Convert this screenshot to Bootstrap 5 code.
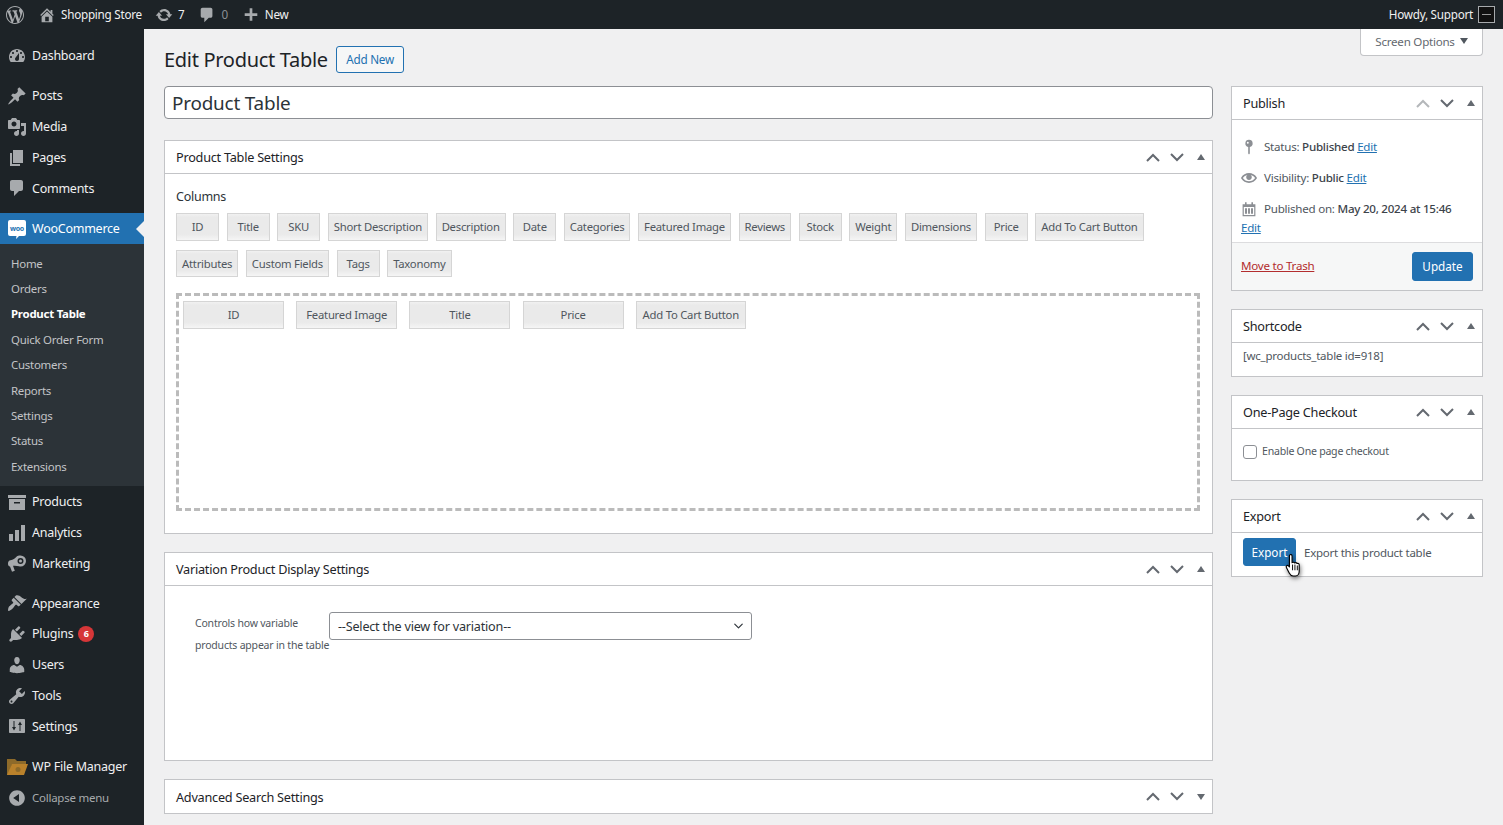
<!DOCTYPE html>
<html lang="en">
<head>
<meta charset="UTF-8">
<meta name="viewport" content="width=device-width, initial-scale=1.0">
<title>Edit Product Table</title>
<link href="https://cdn.jsdelivr.net/npm/bootstrap@5.3.0/dist/css/bootstrap.min.css" rel="stylesheet">
<style>
html, body { height: 825px; overflow: hidden; }
body { background: #f0f0f1; color: #3c434a; font: 12.5px/1.4 "Noto Sans", "Open Sans", sans-serif; letter-spacing: -.25px; }
a { color: #2271b1; }
.ico { width: 20px; height: 20px; fill: currentColor; flex: none; }

/* top bar */
.wp-bar { height: 29px; padding: 0; background: #1d2327; color: #f0f0f1; flex-wrap: nowrap; }
.bar-item { display: flex; align-items: center; height: 29px; color: #f0f0f1; font-size: 11.7px; }
.bar-item .ico { color: #a7aaad; width: 18px; height: 18px; }
.bar-logo { margin-left: 6px; margin-right: 14px; }
.bar-home { margin-right: 13px; gap: 5px; }
.bar-upd { margin-right: 14px; gap: 5px; }
.bar-com { margin-right: 14px; gap: 5px; }
.bar-new { gap: 5px; }
.bar-dim { color: #8c8f94; }
.bar-ava { width: 17px; height: 17px; border: 1px solid #a7aaad; background: #111; position: relative; margin-left: 5px; }
.bar-ava::after { content: ""; position: absolute; left: 3px; right: 3px; top: 7px; height: 1px; background: #999; }

/* side menu */
.wp-shell { height: 796px; }
.side-menu { width: 144px; flex: none; background: #1d2327; padding-top: 11.6px; }
.menu-row { display: flex; align-items: center; height: 30.75px; padding-left: 7px; color: #f0f0f1; font-size: 12.5px; text-decoration: none; }
.menu-row .ico { color: #a7aaad; margin-right: 5px; width: 20px; height: 20px; }
.menu-gap { height: 9.4px; }
.menu-on { background: #2271b1; color: #fff; position: relative; }
.menu-on::after { content: ""; position: absolute; right: 0; top: 8px; border: 8px solid transparent; border-left-width: 0; border-right-color: #f0f0f1; }
.woo-ico { width: 20px; height: 20px; margin-right: 5px; flex: none; }
.fm-ico { width: 22px; height: 18px; margin-left: -1px; margin-right: 4px; flex: none; }
.sub-menu { background: #2c3338; padding: 7px 0 7px; }
.sub-row { display: flex; align-items: center; height: 25.4px; padding-left: 11px; color: #c3c4c7; font-size: 11.45px; text-decoration: none; }
.sub-on { color: #fff; font-weight: 700; }
.menu-count { width: 16px; height: 16px; border-radius: 50%; background: #d63638; color: #fff; font-size: 9px; line-height: 16px; text-align: center; padding: 0; margin-left: 5px; letter-spacing: 0; }
.menu-fold { color: #a7aaad; font-size: 11.5px; margin-top: .7px; }

/* main */
.main-wrap { flex: 1; min-width: 0; padding: 0 20px; }
.head-row { height: 57px; }
.page-title { font-size: 20px; font-weight: 400; color: #1d2327; margin: 17px 8px 0 0; line-height: 27px; letter-spacing: -.3px; }
.add-new { margin-top: 17px; height: 27px; padding: 0 9.5px; font-size: 11.7px; line-height: 25px; border: 1px solid #2271b1; color: #2271b1; background: #f6f7f7; border-radius: 3px; }
.scr-tab { width: 123px; height: 27px; background: #fff; border: 1px solid #c3c4c7; border-top: 0; border-radius: 0 0 4px 4px; color: #646970; font-size: 11.6px; line-height: 25px; text-align: center; }
.scr-tab i { display: inline-block; border: 4.5px solid transparent; border-top: 6px solid #50575e; border-bottom: 0; margin-left: 5px; vertical-align: 2px; }
.col-main { width: 1049px; flex: none; }
.col-side { width: 252px; flex: none; }
.title-box { height: 33px; border: 1px solid #8c8f94; border-radius: 4px; background: #fff; padding: 0 7px; font-size: 18.9px; line-height: 33px; color: #2c3338; margin-bottom: 21px; letter-spacing: -.2px; }

/* meta boxes */
.mbox { border: 1px solid #c3c4c7; border-radius: 0; background: #fff; margin-bottom: 18px; color: #3c434a; --bs-card-bg: #fff; }
.mbox-head { height: 33px; padding: 0 11px; background: #fff; border-bottom: 1px solid #c3c4c7; border-radius: 0 !important; font-size: 12.7px; color: #1d2327; }
.mbox-head > span:first-child { padding-top: 2px; }
.mbox-arrows { display: flex; align-items: center; gap: 10px; margin-right: -4px; color: #646970; }
.mbox-arrows svg { display: block; }
.arw { width: 14px; height: 9px; fill: none; stroke: currentColor; stroke-width: 2; }
.arw-off { color: #b4b7ba; }
.tri { width: 8px; height: 6px; fill: currentColor; margin-left: 3px; }

.settings-body { padding: 0 12px 22px 11px; }
.cols-label { font-size: 12.5px; color: #2c3338; margin: 13px 0 6px; line-height: 20px; }
.chip-row { display: flex; gap: 7.6px; margin-bottom: 9px; }
.col-chip { min-width: 43px; height: 27.5px; padding: 0 5px; border: 1px solid #d5d5d5; background: linear-gradient(#f1f1f1, #eaeaea 12%, #eaeaea 78%, #f5f5f5); color: #50575e; font-size: 11.3px; line-height: 25.5px; text-align: center; white-space: nowrap; }
.drop-zone { height: 218px; margin-top: 16px; border: 3px dashed #bbb; padding: 5px 4px; gap: 12.2px; display: flex; align-items: flex-start; }
.drop-zone .col-chip { min-width: 101px; }
.drop-zone .col-chip:last-child { min-width: 110px; }
.var-body { height: 174px; padding-top: 26px !important; }
.var-label { width: 134px; font-size: 10.5px; line-height: 22px; color: #50575e; white-space: nowrap; margin-left: 30px; letter-spacing: -.2px; }
.var-select { width: 423px; height: 28px; min-height: 28px; padding: 1px 24px 0 8px; font-size: 12.6px; line-height: 26px; color: #2c3338; border: 1px solid #8c8f94; border-radius: 3px; background-position: right 6px center; background-size: 13px 10px; letter-spacing: -.2px; }
.pub-body { padding-top: 17px; height: 122px; }
.pub-line { display: flex; align-items: center; height: 20px; font-size: 11.6px; color: #50575e; margin-bottom: 11px; }
.pub-line b { font-weight: 500; color: #3c434a; }
.pub-line .ico { width: 16px; height: 16px; color: #8c8f94; margin-right: 7px; margin-left: 9px; }
.pub-line.pub-date { margin-bottom: 0; }
.pub-edit { height: 18px; font-size: 11.6px; padding-left: 9px; line-height: 18px; }
.pub-foot { height: 48px; background: #f6f7f7; border-top: 1px solid #dcdcde; padding: 0 9px; }
.trash { color: #b32d2e; font-size: 11.6px; }
.wp-btn { height: 29px; min-width: 61px; padding: 0 8px; border-radius: 3px; background: #2271b1; border: 1px solid #2271b1; color: #fff; font-size: 11.7px; line-height: 27px; }
.short-text { padding: 5px 11px 0; height: 33px; font-size: 11.5px; color: #50575e; }
.check-row { height: 51px; padding: 0 11px 6px; font-size: 10.6px; color: #50575e; }
.check-row .form-check-input { width: 14px; height: 14px; margin: 0 5px 0 0; border: 1px solid #8c8f94; border-radius: 3px; }
.export-body { height: 43px; padding: 5px 11px 0; font-size: 11.5px; color: #50575e; position: relative; }
.export-btn { min-width: 53px; height: 28px; line-height: 26px; padding: 0 6px 2px; }
.export-txt { margin: 7px 0 0 8px; }
.hand { position: absolute; left: 52px; top: 20px; width: 19px; height: 25px; filter: drop-shadow(1px 2px 2px rgba(0,0,0,.5)); }
</style>
</head>
<body>
<svg width="0" height="0" class="position-absolute">
  <symbol id="i-wp" viewBox="0 0 20 20"><path d="M20 10c0-5.51-4.49-10-10-10C4.48 0 0 4.49 0 10c0 5.52 4.48 10 10 10 5.51 0 10-4.48 10-10zM7.78 15.37L4.37 6.22c.55-.02 1.17-.08 1.17-.08.5-.06.44-1.13-.06-1.11 0 0-1.45.11-2.37.11-.18 0-.37 0-.58-.01C4.12 2.69 6.87 1.11 10 1.11c2.33 0 4.45.87 6.05 2.34-.68-.11-1.65.39-1.65 1.58 0 .74.45 1.36.9 2.1.35.61.55 1.36.55 2.46 0 1.49-1.4 5-1.4 5l-3.03-8.37c.54-.02.82-.17.82-.17.5-.05.44-1.25-.06-1.22 0 0-1.44.12-2.38.12-.87 0-2.33-.12-2.33-.12-.5-.03-.56 1.2-.06 1.22l.92.08 1.26 3.41zM17.41 10c.24-.64.74-1.87.43-4.25.7 1.29 1.05 2.71 1.05 4.25 0 3.29-1.73 6.24-4.4 7.78.97-2.59 1.94-5.2 2.92-7.78zM6.1 18.09C3.12 16.65 1.11 13.53 1.11 10c0-1.3.23-2.48.72-3.59C3.25 10.3 4.67 14.2 6.1 18.09zm4.03-6.63l2.58 6.98c-.86.29-1.76.45-2.71.45-.79 0-1.57-.11-2.29-.33.81-2.38 1.62-4.74 2.42-7.1z"/></symbol>
  <symbol id="i-home" viewBox="0 0 20 20"><path d="M16 8.5l1.53 1.53-1.06 1.06L10 4.62l-6.47 6.47-1.06-1.06L10 2.5l4 4v-2h2v4zm-6-2.46l6 5.99V18H4v-5.97zM12 17v-5H8v5h4z"/></symbol>
  <symbol id="i-update" viewBox="0 0 20 20"><path d="M10.2 3.28c3.53 0 6.43 2.61 6.92 6h2.08l-3.5 4-3.5-4h2.32c-.45-1.97-2.21-3.45-4.32-3.45-1.45 0-2.73.71-3.54 1.78L4.95 5.66C6.23 4.2 8.11 3.28 10.2 3.28zm-.4 13.44c-3.52 0-6.43-2.61-6.92-6H.8l3.5-4c1.17 1.33 2.33 2.67 3.5 4H5.48c.45 1.97 2.21 3.45 4.32 3.45 1.45 0 2.73-.71 3.54-1.78l1.71 1.95c-1.28 1.46-3.15 2.38-5.25 2.38z"/></symbol>
  <symbol id="i-comment" viewBox="0 0 20 20"><path d="M5 2h9c1.1 0 2 .9 2 2v7c0 1.1-.9 2-2 2h-2l-5 5v-5H5c-1.1 0-2-.9-2-2V4c0-1.1.9-2 2-2z"/></symbol>
  <symbol id="i-plus" viewBox="0 0 20 20"><path d="M17 8v3h-5.5v5.5h-3V11H3V8h5.5V2.5h3V8z"/></symbol>
  <symbol id="i-dash" viewBox="0 0 20 20"><path d="M3.76 16h12.48c1.1-1.37 1.76-3.1 1.76-5 0-4.42-3.58-8-8-8s-8 3.58-8 8c0 1.9.66 3.63 1.76 5zM10 4c.55 0 1 .45 1 1s-.45 1-1 1-1-.45-1-1 .45-1 1-1zM6 6c.55 0 1 .45 1 1s-.45 1-1 1-1-.45-1-1 .45-1 1-1zm8 0c.55 0 1 .45 1 1s-.45 1-1 1-1-.45-1-1 .45-1 1-1zm-5.37 5.55L12 7v6c0 1.1-.9 2-2 2s-2-.9-2-2c0-.57.24-1.08.63-1.45zM4 10c.55 0 1 .45 1 1s-.45 1-1 1-1-.45-1-1 .45-1 1-1zm12 0c.55 0 1 .45 1 1s-.45 1-1 1-1-.45-1-1 .45-1 1-1z"/></symbol>
  <symbol id="i-pin" viewBox="0 0 20 20"><path d="M10.44 3.02l1.82-1.82 6.36 6.35-1.83 1.82c-1.05-.68-2.48-.57-3.41.36l-.75.75c-.92.93-1.04 2.35-.35 3.41l-1.83 1.82-2.41-2.41-2.8 2.79c-.42.42-3.38 2.71-3.8 2.29s1.86-3.39 2.28-3.81l2.79-2.79L4.1 9.36l1.83-1.82c1.05.69 2.48.57 3.4-.36l.75-.75c.93-.92 1.05-2.35.36-3.41z"/></symbol>
  <symbol id="i-media" viewBox="0 0 20 20"><path d="M13 11V4c0-.55-.45-1-1-1h-1.67L9 1H5L3.67 3H2c-.55 0-1 .45-1 1v7c0 .55.45 1 1 1h10c.55 0 1-.45 1-1zM7 4.5c1.38 0 2.5 1.12 2.5 2.5S8.38 9.5 7 9.5 4.5 8.38 4.5 7 5.62 4.5 7 4.5zM14 6h5v10.5c0 1.38-1.12 2.5-2.5 2.5S14 17.88 14 16.5s1.12-2.5 2.5-2.5c.17 0 .34.02.5.05V9h-3V6zm-4 8.05V13h2v3.5c0 1.38-1.12 2.5-2.5 2.5S7 17.88 7 16.5 8.12 14 9.5 14c.17 0 .34.02.5.05z"/></symbol>
  <symbol id="i-pages" viewBox="0 0 20 20"><path d="M6 15V2h10v13H6zm-1 1h8v2H3V5h2v11z"/></symbol>
  <symbol id="i-box" viewBox="0 0 20 20"><path d="M1 3h18v3H1V3zm1 4h16v11H2V7zm5 3v1.5h6V10H7z" fill-rule="evenodd"/></symbol>
  <symbol id="i-bars" viewBox="0 0 20 20"><path d="M2 11h4v7H2zM8 7h4v11H8zM14 2h4v16h-4z"/></symbol>
  <symbol id="i-mega" viewBox="0 0 20 20"><path fill-rule="evenodd" d="M13.5 2.5a5.500 5.500 0 1 1 0 11c-.5 0-1-.1-1.500-.2-2-.6-4-.8-6-.5l1.800 5-2.800 1-2-5.300c-1.500-.3-2-1.300-2-3 0-2 1-3 2.500-3.300 2.500-.5 4.500-1.800 6.500-4 .6-.5 1.500-.7 3.500-.7zm0 2.500a3 3 0 1 0 0 6 3 3 0 0 0 0-6zm0 1.500a1.500 1.500 0 1 1 0 3 1.500 1.500 0 0 1 0-3z"/></symbol>
  <symbol id="i-brush" viewBox="0 0 20 20"><path d="M14.48 11.06L7.41 3.99l1.5-1.5c.5-.56 2.3-.47 3.51.32 1.21.8 1.43 1.28 2.91 2.1 1.18.64 2.45 1.26 4.45.85zm-.71.71L6.7 4.7 4.93 6.47c-.39.39-.39 1.02 0 1.41l1.06 1.06c.39.39.39 1.03 0 1.42-.6.6-1.43 1.11-2.21 1.69-.35.26-.7.53-1.01.84C1.43 13.23.78 17.24 1.2 17.8c.68.68 3.33-1.29 4.69-2.65.31-.31.58-.66.84-1.01.58-.78 1.09-1.61 1.69-2.21.39-.39 1.03-.39 1.42 0l1.06 1.06c.39.39 1.02.39 1.41 0z"/></symbol>
  <symbol id="i-plug" viewBox="0 0 20 20"><path d="M13.11 4.36L9.87 7.6 8 5.73l3.24-3.24c.35-.34 1.05-.2 1.56.32.52.51.66 1.21.31 1.55zm-8 1.77l.91-1.12 9.01 9.01-1.19.84c-.71.71-2.63 1.16-3.82 1.16H6.14L4.9 17.26c-.59.59-1.54.59-2.12 0-.59-.58-.59-1.53 0-2.12l1.24-1.24v-3.88c0-1.13.4-3.19 1.09-3.89zm7.26 3.97l3.24-3.24c.34-.35 1.04-.21 1.55.31.52.51.66 1.21.31 1.55l-3.24 3.25z"/></symbol>
  <symbol id="i-user" viewBox="0 0 20 20"><path d="M10 9.25c-2.27 0-2.73-3.44-2.73-3.44C7 4.02 7.82 2 9.97 2c2.16 0 2.98 2.02 2.71 3.81 0 0-.41 3.44-2.68 3.44zm0 2.57L12.72 10c2.39 0 4.52 2.33 4.52 4.53v2.49s-3.65 1.13-7.24 1.13c-3.65 0-7.24-1.13-7.24-1.13v-2.49c0-2.25 1.94-4.48 4.47-4.48z"/></symbol>
  <symbol id="i-tool" viewBox="0 0 20 20"><path d="M16.68 9.77c-1.34 1.34-3.3 1.67-4.95.99l-5.41 6.52c-.99.99-2.59.99-3.58 0s-.99-2.59 0-3.57l6.52-5.42c-.68-1.65-.35-3.61.99-4.95 1.28-1.28 3.12-1.62 4.72-1.06l-2.89 2.89 2.82 2.82 2.86-2.87c.53 1.58.18 3.39-1.08 4.65zM3.81 16.21c.4.39 1.04.39 1.43 0 .4-.4.4-1.04 0-1.43-.39-.4-1.03-.4-1.43 0-.39.39-.39 1.03 0 1.43z"/></symbol>
  <symbol id="i-sett" viewBox="0 0 20 20"><path fill-rule="evenodd" d="M3 3h14c.55 0 1 .45 1 1v12c0 .55-.45 1-1 1H3c-.55 0-1-.45-1-1V4c0-.55.45-1 1-1zm3.5 2v6H5l2 3.5L9 11H7.5V5h-1zm6 10V9H11l2-3.5L15 9h-1.5v6h-1z"/></symbol>
  <symbol id="i-fold" viewBox="0 0 20 20"><path d="M10 2.16c4.33 0 7.84 3.51 7.84 7.84s-3.51 7.84-7.84 7.84S2.16 14.33 2.16 10 5.71 2.16 10 2.16zm2 11.72V6.12L6.18 9.97z"/></symbol>
  <symbol id="i-key" viewBox="0 0 20 20"><path d="M10 1a4.500 4.500 0 0 1 1 8.900V18l-1 1.500L9 18V9.900A4.500 4.500 0 0 1 10 1zM8.500 3.500a1.200 1.200 0 1 0 0 2.400 1.200 1.200 0 0 0 0-2.400z" fill-rule="evenodd"/></symbol>
  <symbol id="i-eye" viewBox="0 0 20 20"><path d="M19.7 9.4C17.7 6 14 3.9 10 3.9S2.3 6 .3 9.4L0 10l.3.6c2 3.4 5.7 5.5 9.7 5.5s7.7-2.100 9.7-5.500l.3-.6-.3-.6zM10 14.100c-3.100 0-6-1.600-7.700-4.100C3.600 8 5.700 6.600 8 6.100c-.9.6-1.500 1.700-1.500 2.900 0 1.900 1.600 3.500 3.500 3.500s3.500-1.600 3.500-3.500c0-1.200-.6-2.300-1.500-2.900 2.300.5 4.400 1.900 5.700 3.900-1.700 2.500-4.600 4.100-7.700 4.100z"/></symbol>
  <symbol id="i-cal" viewBox="0 0 20 20"><path fill-rule="evenodd" d="M5 1.500h2V4h6V1.500h2V4h3v15H2V4h3V1.500zM3.500 7.500v10h13v-10h-13zM5 9h2.500v7H5V9zm3.800 0h2.400v7H8.800V9zm3.700 0H15v7h-2.500V9z"/></symbol>
</svg>

<nav class="navbar wp-bar">
  <div class="d-flex align-items-center w-100">
    <span class="bar-item bar-logo"><svg class="ico"><use href="#i-wp"/></svg></span>
    <span class="bar-item bar-home"><svg class="ico"><use href="#i-home"/></svg><span>Shopping Store</span></span>
    <span class="bar-item bar-upd"><svg class="ico"><use href="#i-update"/></svg><span>7</span></span>
    <span class="bar-item bar-com"><svg class="ico"><use href="#i-comment"/></svg><span class="bar-dim">0</span></span>
    <span class="bar-item bar-new"><svg class="ico"><use href="#i-plus"/></svg><span>New</span></span>
    <span class="bar-item ms-auto me-2">Howdy, Support<span class="bar-ava"></span></span>
  </div>
</nav>

<div class="d-flex wp-shell">
  <aside class="side-menu">
    <a class="menu-row"><svg class="ico"><use href="#i-dash"/></svg>Dashboard</a>
    <div class="menu-gap"></div>
    <a class="menu-row"><svg class="ico"><use href="#i-pin"/></svg>Posts</a>
    <a class="menu-row"><svg class="ico"><use href="#i-media"/></svg>Media</a>
    <a class="menu-row"><svg class="ico"><use href="#i-pages"/></svg>Pages</a>
    <a class="menu-row"><svg class="ico"><use href="#i-comment"/></svg>Comments</a>
    <div class="menu-gap"></div>
    <a class="menu-row menu-on">
      <svg class="woo-ico" viewBox="0 0 20 20"><path fill="#fff" d="M3 1h14a2 2 0 0 1 2 2v12a2 2 0 0 1-2 2h-5l-3 3 .5-3H3a2 2 0 0 1-2-2V3a2 2 0 0 1 2-2z"/><text x="10" y="11.5" text-anchor="middle" font-size="7" font-weight="700" font-family="Noto Sans, sans-serif" fill="#2271b1" letter-spacing="-.3">woo</text></svg>WooCommerce</a>
    <div class="sub-menu">
      <a class="sub-row">Home</a>
      <a class="sub-row">Orders</a>
      <a class="sub-row sub-on">Product Table</a>
      <a class="sub-row">Quick Order Form</a>
      <a class="sub-row">Customers</a>
      <a class="sub-row">Reports</a>
      <a class="sub-row">Settings</a>
      <a class="sub-row">Status</a>
      <a class="sub-row">Extensions</a>
    </div>
    <a class="menu-row"><svg class="ico"><use href="#i-box"/></svg>Products</a>
    <a class="menu-row"><svg class="ico"><use href="#i-bars"/></svg>Analytics</a>
    <a class="menu-row"><svg class="ico"><use href="#i-mega"/></svg>Marketing</a>
    <div class="menu-gap"></div>
    <a class="menu-row"><svg class="ico"><use href="#i-brush"/></svg>Appearance</a>
    <a class="menu-row"><svg class="ico"><use href="#i-plug"/></svg>Plugins<span class="badge menu-count">6</span></a>
    <a class="menu-row"><svg class="ico"><use href="#i-user"/></svg>Users</a>
    <a class="menu-row"><svg class="ico"><use href="#i-tool"/></svg>Tools</a>
    <a class="menu-row"><svg class="ico"><use href="#i-sett"/></svg>Settings</a>
    <div class="menu-gap"></div>
    <a class="menu-row">
      <svg class="fm-ico" viewBox="0 0 22 18"><path fill="#8d6a2a" d="M1 1h8l2 2h9v4H6L2 17H1z"/><path fill="#b9812b" d="M6 6h16l-4 11H1z"/><circle cx="12" cy="11.5" r="2.5" fill="#8d6a2a"/></svg>WP File Manager</a>
    <a class="menu-row menu-fold"><svg class="ico"><use href="#i-fold"/></svg>Collapse menu</a>
  </aside>

  <main class="main-wrap">
    <div class="d-flex head-row">
      <h1 class="page-title">Edit Product Table</h1>
      <a class="add-new text-decoration-none">Add New</a>
      <div class="scr-tab ms-auto">Screen Options<i></i></div>
    </div>
    <div class="d-flex justify-content-between">
      <div class="col-main">
        <div class="title-box">Product Table</div>

        <div class="card mbox">
          <div class="card-header mbox-head d-flex align-items-center justify-content-between"><span>Product Table Settings</span>
            <span class="mbox-arrows"><svg class="arw" viewBox="0 0 14 9"><path d="M1 8l6-6 6 6"/></svg><svg class="arw" viewBox="0 0 14 9"><path d="M1 1l6 6 6-6"/></svg><svg class="tri" viewBox="0 0 8 6"><path d="M4 0l4 6H0z"/></svg></span></div>
          <div class="card-body settings-body">
            <div class="cols-label">Columns</div>
            <div class="chip-row">
              <div class="col-chip">ID</div><div class="col-chip">Title</div><div class="col-chip">SKU</div><div class="col-chip">Short Description</div><div class="col-chip">Description</div><div class="col-chip">Date</div><div class="col-chip">Categories</div><div class="col-chip">Featured Image</div><div class="col-chip">Reviews</div><div class="col-chip">Stock</div><div class="col-chip">Weight</div><div class="col-chip">Dimensions</div><div class="col-chip">Price</div><div class="col-chip">Add To Cart Button</div>
            </div>
            <div class="chip-row">
              <div class="col-chip">Attributes</div><div class="col-chip">Custom Fields</div><div class="col-chip">Tags</div><div class="col-chip">Taxonomy</div>
            </div>
            <div class="drop-zone">
              <div class="col-chip">ID</div><div class="col-chip">Featured Image</div><div class="col-chip">Title</div><div class="col-chip">Price</div><div class="col-chip">Add To Cart Button</div>
            </div>
          </div>
        </div>

        <div class="card mbox">
          <div class="card-header mbox-head d-flex align-items-center justify-content-between"><span>Variation Product Display Settings</span>
            <span class="mbox-arrows"><svg class="arw" viewBox="0 0 14 9"><path d="M1 8l6-6 6 6"/></svg><svg class="arw" viewBox="0 0 14 9"><path d="M1 1l6 6 6-6"/></svg><svg class="tri" viewBox="0 0 8 6"><path d="M4 0l4 6H0z"/></svg></span></div>
          <div class="card-body p-0 d-flex align-items-start var-body">
            <div class="var-label">Controls how variable<br>products appear in the table</div>
            <select class="form-select var-select"><option>--Select the view for variation--</option></select>
          </div>
        </div>

        <div class="card mbox">
          <div class="card-header mbox-head border-0 d-flex align-items-center justify-content-between"><span>Advanced Search Settings</span>
            <span class="mbox-arrows"><svg class="arw" viewBox="0 0 14 9"><path d="M1 8l6-6 6 6"/></svg><svg class="arw" viewBox="0 0 14 9"><path d="M1 1l6 6 6-6"/></svg><svg class="tri" viewBox="0 0 8 6"><path d="M4 6L0 0h8z"/></svg></span></div>
        </div>
      </div>

      <div class="col-side">
        <div class="card mbox">
          <div class="card-header mbox-head d-flex align-items-center justify-content-between"><span>Publish</span>
            <span class="mbox-arrows"><svg class="arw arw-off" viewBox="0 0 14 9"><path d="M1 8l6-6 6 6"/></svg><svg class="arw" viewBox="0 0 14 9"><path d="M1 1l6 6 6-6"/></svg><svg class="tri" viewBox="0 0 8 6"><path d="M4 0l4 6H0z"/></svg></span></div>
          <div class="pub-body">
            <div class="pub-line"><svg class="ico"><use href="#i-key"/></svg>Status:&nbsp;<b>Published</b>&nbsp;<a href="#">Edit</a></div>
            <div class="pub-line"><svg class="ico"><use href="#i-eye"/></svg>Visibility:&nbsp;<b>Public</b>&nbsp;<a href="#">Edit</a></div>
            <div class="pub-line pub-date"><svg class="ico"><use href="#i-cal"/></svg>Published on:&nbsp;<b>May 20, 2024 at 15:46</b></div>
            <div class="pub-edit"><a href="#">Edit</a></div>
          </div>
          <div class="pub-foot d-flex align-items-center justify-content-between">
            <a href="#" class="trash">Move to Trash</a>
            <button class="btn wp-btn">Update</button>
          </div>
        </div>

        <div class="card mbox">
          <div class="card-header mbox-head d-flex align-items-center justify-content-between"><span>Shortcode</span>
            <span class="mbox-arrows"><svg class="arw" viewBox="0 0 14 9"><path d="M1 8l6-6 6 6"/></svg><svg class="arw" viewBox="0 0 14 9"><path d="M1 1l6 6 6-6"/></svg><svg class="tri" viewBox="0 0 8 6"><path d="M4 0l4 6H0z"/></svg></span></div>
          <div class="short-text">[wc_products_table id=918]</div>
        </div>

        <div class="card mbox">
          <div class="card-header mbox-head d-flex align-items-center justify-content-between"><span>One-Page Checkout</span>
            <span class="mbox-arrows"><svg class="arw" viewBox="0 0 14 9"><path d="M1 8l6-6 6 6"/></svg><svg class="arw" viewBox="0 0 14 9"><path d="M1 1l6 6 6-6"/></svg><svg class="tri" viewBox="0 0 8 6"><path d="M4 0l4 6H0z"/></svg></span></div>
          <div class="check-row d-flex align-items-center"><input class="form-check-input" type="checkbox" id="opc"><label for="opc">Enable One page checkout</label></div>
        </div>

        <div class="card mbox">
          <div class="card-header mbox-head d-flex align-items-center justify-content-between"><span>Export</span>
            <span class="mbox-arrows"><svg class="arw" viewBox="0 0 14 9"><path d="M1 8l6-6 6 6"/></svg><svg class="arw" viewBox="0 0 14 9"><path d="M1 1l6 6 6-6"/></svg><svg class="tri" viewBox="0 0 8 6"><path d="M4 0l4 6H0z"/></svg></span></div>
          <div class="export-body d-flex align-items-start">
            <button class="btn wp-btn export-btn">Export</button><span class="export-txt">Export this product table</span>
            <svg class="hand" viewBox="0 0 20 26"><path fill="#fff" stroke="#000" stroke-width="1.2" stroke-linejoin="round" d="M6 2c1-1 2.500-.5 2.500 1v7c1-.7 2.200-.6 2.700.3.900-.6 2.100-.4 2.500.6 1-.5 2.300.1 2.300 1.300V19c0 2.500-1.500 5-4 5H9.500c-2 0-3-1-4-3L2.500 15c-.8-1.500 1-2.800 2.200-1.600l1 1.100V3c0-.4.100-.7.300-1z"/><path stroke="#000" fill="none" d="M9 12v6M11.500 12v6M14 13v5"/></svg>
          </div>
        </div>
      </div>
    </div>
  </main>
</div>

<script src="https://cdn.jsdelivr.net/npm/bootstrap@5.3.0/dist/js/bootstrap.bundle.min.js"></script>
</body>
</html>
